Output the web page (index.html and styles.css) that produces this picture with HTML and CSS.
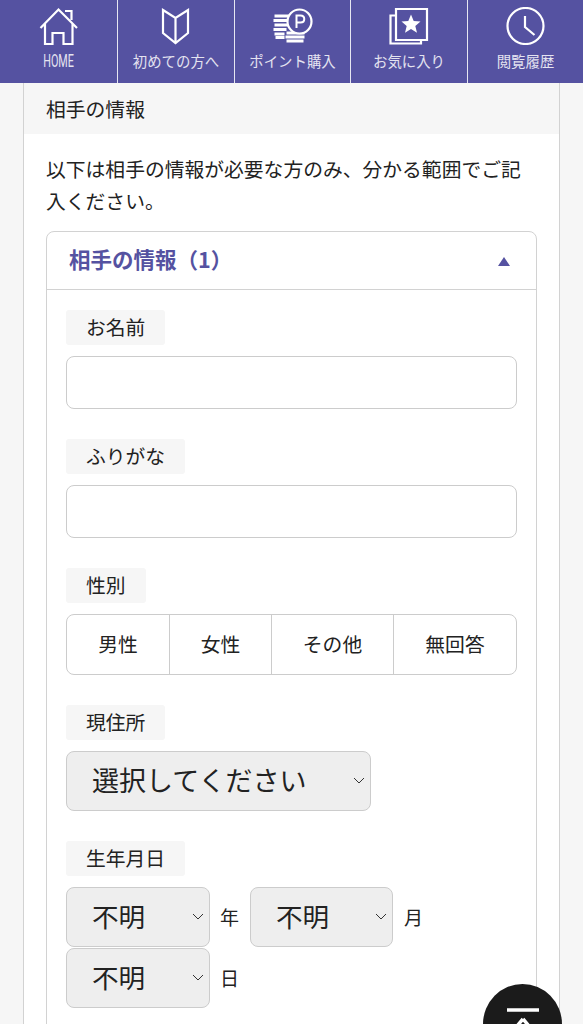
FILE: index.html
```html
<!DOCTYPE html>
<html lang="ja">
<head>
<meta charset="utf-8">
<title>相手の情報</title>
<link rel="stylesheet" href="styles.css">
</head>
<body>
<nav class="nav">
  <a class="nav-item">
    <svg class="nav-icon" viewBox="34.500 7 48 38"><path d="M40 28 58 9.500 76.500 28M64.500 11H71V20M44.500 24V44H52V33H63V44H72V24"/></svg>
    <span class="nav-label nav-label-home">HOME</span>
  </a>
  <a class="nav-item">
    <svg class="nav-icon" viewBox="152 7 48 38"><path d="M163 10 175.500 18 188 10V33L175.500 43 163 33ZM175.500 18V43"/></svg>
    <span class="nav-label">初めての方へ</span>
  </a>
  <a class="nav-item">
    <svg class="nav-icon" viewBox="268.500 7 48 38">
      <path class="coins" d="M274 16H289M273 20.500H288M274 25H288M273 29.500H286M274 34H284M275 37.500H284"/>
      <path class="coins" d="M286 33H304M285 37H304M286 41H303"/>
      <circle class="coin-p" cx="299" cy="21.500" r="12"/>
      <path class="fine" d="M296 28V15.500H300C305 15.500 305 22.500 300 22.500H296"/>
    </svg>
    <span class="nav-label">ポイント購入</span>
  </a>
  <a class="nav-item">
    <svg class="nav-icon" viewBox="385 7 48 38">
      <path d="M396 9H427V40H396ZM396 15.500H390.500V43.500H421V40"/>
      <polygon class="solid" points="411,14.500 413.700,21 420.500,21.500 415.300,26 417,32.700 411,29 405,32.700 406.700,26 401.500,21.500 408.300,21"/>
    </svg>
    <span class="nav-label">お気に入り</span>
  </a>
  <a class="nav-item">
    <svg class="nav-icon" viewBox="501.500 7 48 38"><circle cx="525" cy="26" r="18"/><path d="M524.500 16V27L534 35"/></svg>
    <span class="nav-label">閲覧履歴</span>
  </a>
</nav>

<main class="page">
  <section class="card">
    <h2 class="card-title">相手の情報</h2>
    <div class="card-body">
      <p class="intro">以下は相手の情報が必要な方のみ、分かる範囲でご記入ください。</p>
      <div class="accordion">
        <div class="accordion-head">
          <span class="accordion-title">相手の情報（1）</span>
          <span class="accordion-arrow"></span>
        </div>
        <div class="accordion-body">
          <div class="field">
            <label class="tag">お名前</label>
            <input class="text-input" type="text">
          </div>
          <div class="field">
            <label class="tag">ふりがな</label>
            <input class="text-input" type="text">
          </div>
          <div class="field">
            <label class="tag">性別</label>
            <div class="segments">
              <span class="segment">男性</span>
              <span class="segment">女性</span>
              <span class="segment">その他</span>
              <span class="segment">無回答</span>
            </div>
          </div>
          <div class="field">
            <label class="tag">現住所</label>
            <div class="select-wrap select-wide">
              <select class="select"><option>選択してください</option></select>
              <svg class="chevron" viewBox="0 0 12 7"><path d="M1 1 6 6 11 1"/></svg>
            </div>
          </div>
          <div class="field">
            <label class="tag">生年月日</label>
            <div class="date-row">
              <div class="select-wrap select-year">
                <select class="select"><option>不明</option></select>
                <svg class="chevron" viewBox="0 0 12 7"><path d="M1 1 6 6 11 1"/></svg>
              </div>
              <span class="unit">年</span>
              <div class="select-wrap select-month">
                <select class="select"><option>不明</option></select>
                <svg class="chevron" viewBox="0 0 12 7"><path d="M1 1 6 6 11 1"/></svg>
              </div>
              <span class="unit unit-month">月</span>
            </div>
            <div class="date-row">
              <div class="select-wrap select-year">
                <select class="select"><option>不明</option></select>
                <svg class="chevron" viewBox="0 0 12 7"><path d="M1 1 6 6 11 1"/></svg>
              </div>
              <span class="unit">日</span>
            </div>
          </div>
        </div>
      </div>
    </div>
  </section>
</main>

<a class="to-top">
  <svg class="to-top-icon" viewBox="0 0 34 40"><path d="M1 2H33M17 11 6 24M17 11 28 24"/></svg>
</a>
</body>
</html>
```

FILE: styles.css
```css
* { box-sizing: border-box; }

html, body {
  margin: 0;
  height: 1024px;
  overflow: hidden;
}

body {
  position: relative;
  background: #f6f6f6;
  color: #222;
  font-family: "Noto Sans CJK JP", "Noto Sans", sans-serif;
  font-size: 20px;
}

.nav {
  display: grid;
  grid-template-columns: 117px 117px 116px 117px 1fr;
  height: 83px;
  background: #5552a1;
}

.nav-item {
  display: flex;
  flex-direction: column;
  align-items: center;
  min-width: 0;
  padding-top: 7px;
  border-left: 1px solid #e6e6f2;
}

.nav-item:first-child { border-left: 0; }

.nav-icon {
  display: block;
  width: 48px;
  height: 38px;
  fill: none;
  stroke: #fff;
  stroke-width: 2.2;
}

.nav-icon .fine { stroke-width: 2; }
.nav-icon .solid { fill: #fff; stroke: none; }
.nav-icon .coins { stroke-width: 3; }
.nav-icon .coin-p { fill: #5552a1; }

.nav-label {
  margin-top: 6px;
  color: #e4e3f0;
  font-size: 14.4px;
  line-height: 20px;
  white-space: nowrap;
}

.nav-label-home {
  font-family: "Roboto", sans-serif;
  font-size: 18px;
  transform: scaleX(0.6);
}

.page {
  padding: 0 23px;
}

.card {
  background: #fff;
  border-left: 1px solid #d2d2d2;
  border-right: 1px solid #d2d2d2;
}

.card-title {
  margin: 0;
  height: 51px;
  padding-left: 22px;
  background: #f6f6f6;
  font-size: 19.8px;
  font-weight: 400;
  line-height: 52px;
}

.card-body {
  padding: 19px 22px 0;
}

.intro {
  margin: 0 0 14px;
  font-size: 19.8px;
  line-height: 32px;
}

.accordion {
  background: #fff;
  border: 1px solid #d2d2d2;
  border-radius: 8px;
}

.accordion-head {
  display: flex;
  align-items: center;
  justify-content: space-between;
  height: 58px;
  padding: 0 26px 0 22px;
  border-bottom: 1px solid #d2d2d2;
}

.accordion-title {
  color: #5552a1;
  font-size: 21.5px;
  font-weight: 700;
  line-height: 54px;
  align-self: flex-start;
}

.accordion-arrow {
  width: 0;
  height: 0;
  margin-top: 2px;
  border-left: 6px solid transparent;
  border-right: 6px solid transparent;
  border-bottom: 9px solid #5552a1;
}

.accordion-body {
  padding: 20px 19px;
}

.field {
  margin-bottom: 30px;
}

.tag {
  display: table;
  height: 35px;
  margin-bottom: 11px;
  padding: 0 20px;
  background: #f6f6f6;
  border-radius: 3px;
  font-size: 19.8px;
  line-height: 34px;
}

.text-input {
  display: block;
  width: 100%;
  height: 53px;
  background: #fff;
  border: 1px solid #cccccc;
  border-radius: 8px;
}

.segments {
  display: grid;
  grid-template-columns: 102px 102px 122px 1fr;
  height: 61px;
  border: 1px solid #cccccc;
  border-radius: 8px;
}

.segment {
  border-left: 1px solid #cccccc;
  font-size: 19.8px;
  line-height: 58px;
  text-align: center;
}

.segment:first-child { border-left: 0; }

.select-wrap {
  position: relative;
  height: 60px;
}

.select-wide { width: 305px; }
.select-year { width: 144px; }
.select-month { width: 143px; }

.select {
  display: block;
  width: 100%;
  height: 100%;
  padding: 0 0 3px 25px;
  appearance: none;
  background: #eeeeee;
  border: 1px solid #cccccc;
  border-radius: 8px;
  color: #222;
  font-family: inherit;
  font-size: 26.6px;
}

.select-wide .select { font-size: 27px; }

.chevron {
  position: absolute;
  top: 26px;
  right: 6px;
  width: 12px;
  height: 7px;
  fill: none;
  stroke: #333;
  stroke-width: 1;
}

.date-row {
  display: flex;
  align-items: center;
  margin-bottom: 1px;
}

.unit {
  width: 40px;
  padding-left: 10px;
  font-size: 19px;
  line-height: 60px;
}

.unit-month { padding-left: 11px; }

.to-top {
  position: absolute;
  left: 483px;
  top: 984px;
  width: 79px;
  height: 80px;
  border-radius: 50%;
  background: #1b1b1b;
}

.to-top-icon {
  position: absolute;
  left: 23px;
  top: 24px;
  width: 34px;
  height: 40px;
  fill: none;
  stroke: #fff;
  stroke-width: 3.5;
}
```
